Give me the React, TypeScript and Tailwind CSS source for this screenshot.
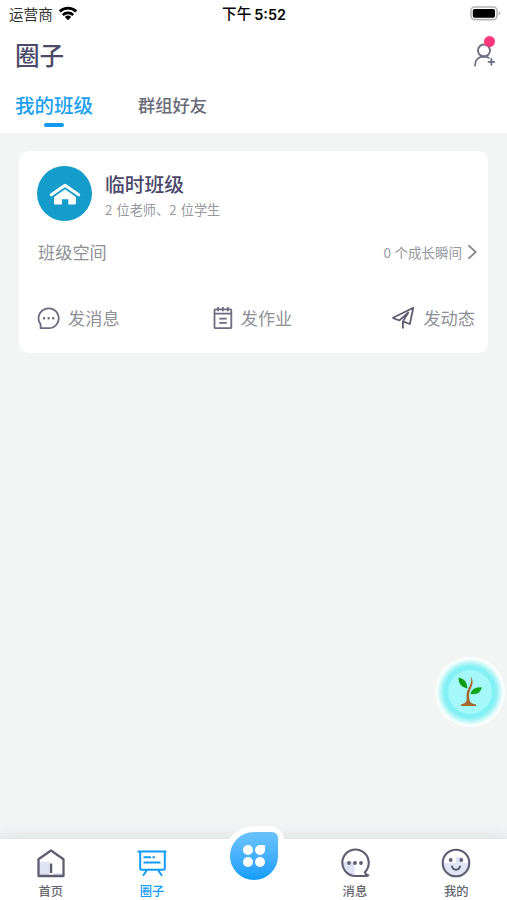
import { useState } from "react";

const WifiIcon = () => (
    <svg width="20" height="15" viewBox="0 0 20 15" fill="none" stroke="#000" strokeWidth="2.7">
        <path d="M1.8 5.5a11.8 11.8 0 0 1 16.4 0" />
        <path d="M4.8 9a7.5 7.5 0 0 1 10.4 0" />
        <path d="M10 14.2l-3.2-3.3a4.6 4.6 0 0 1 6.4 0z" fill="#000" stroke="none" />
    </svg>
);

const BatteryIcon = () => (
    <svg width="31" height="15" viewBox="0 0 31 15">
        <rect x="1" y="1" width="26" height="12.6" rx="3.6" fill="#fff" stroke="#b5b5b5" strokeWidth="1.6" />
        <rect x="2.8" y="2.9" width="22.2" height="8.9" rx="1.8" fill="#000" />
        <path d="M28.6 5.2q1.8.6 1.8 2.1t-1.8 2.1z" fill="#b5b5b5" />
    </svg>
);

const AddFriendIcon = () => (
    <svg width="24" height="25" viewBox="0 0 24 25" fill="none" stroke="#6b6d80" strokeWidth="1.8" strokeLinecap="round">
        <circle cx="11" cy="7.5" r="6" />
        <path d="M2 22.5c0-5.5 3.5-9 9-9 2 0 3.6.5 4.8 1.4" />
        <path d="M18.4 16v5.8M15.5 18.9h5.8" />
    </svg>
);

const HouseIcon = () => (
    <svg width="32" height="24" viewBox="0 0 32 24" fill="none">
        <path d="M2.3 12.8 16 3.2l13.7 9.6" stroke="#fff" strokeWidth="3" strokeLinecap="round" strokeLinejoin="round" />
        <path d="M5 15 16 7.2 27 15V21q0 1.5-1.5 1.5h-6.2v-5.3h-6.4v5.3H6.5Q5 22.5 5 21z" fill="#fff" />
    </svg>
);

const ChatIcon = () => (
    <svg width="24" height="24" viewBox="0 0 24 24" fill="none" stroke="#6d6b7e" strokeWidth="1.8" strokeLinejoin="round">
        <path d="M11.7 22.2H3.6V18.3A10.1 9.9 0 1 1 11.7 22.2z" />
        <path d="M7 12.3h.1M11.6 12.3h.1M16.2 12.3h.1" strokeWidth="2.4" strokeLinecap="round" />
    </svg>
);

const HomeworkIcon = () => (
    <svg width="20" height="24" viewBox="0 0 20 24" fill="none" stroke="#6d6b7e" strokeWidth="1.8" strokeLinejoin="round">
        <rect x="1.5" y="3.3" width="16.8" height="18.9" rx="1" />
        <path d="M1.5 7.7h16.8M5 1v4.3M9.9 1v4.3M14.8 1v4.3M6.2 12.7h7.6M6.2 16.9h7.6" />
    </svg>
);

const PlaneIcon = () => (
    <svg width="24" height="24" viewBox="0 0 24 24" fill="none" stroke="#5f5e70" strokeWidth="1.8" strokeLinejoin="round">
        <path d="M1.5 12 22.3 1.7 18.8 18 11.9 15.4V22.5M1.5 12l7 2.3L17.3 6.5 11.9 15.4" />
    </svg>
);

const HomeIcon = () => (
    <svg width="30" height="30" viewBox="0 0 30 30" fill="none">
        <path d="M3 14h10v14H3zM18 25h8v3h-8z" fill="#dfe1f5" />
        <path d="M2.5 11.3 15 2.5l12.5 8.8v16.7h-25z" stroke="#5f5d70" strokeWidth="2.3" strokeLinejoin="round" />
        <path d="M15 15.5V25" stroke="#5f5d70" strokeWidth="2.5" />
    </svg>
);

const BoardIcon = () => (
    <svg width="30" height="30" viewBox="0 0 30 30" fill="none" stroke="#139cf6" strokeWidth="2">
        <path d="M.6 3.5h28.8" />
        <path d="M3.2 3.5v17.2q0 1 1 1h22.6q1 0 1-1V3.5M10 22l-4 5.7M21 22l4 5.7" />
        <path d="M6.5 9.2h7.5M15.5 9.2h2.4M6.5 14.6h17" />
    </svg>
);

const MessageIcon = () => (
    <svg width="30" height="30" viewBox="0 0 30 30" fill="none">
        <path d="M2.5 14h12v13.5A13 13 0 0 1 2.5 14z" fill="#dfe1f5" />
        <path d="M28.3 27.3Q25.8 27.2 24.8 24.2A13.2 13.2 0 1 0 15.5 28H26.5L28.3 27.3" stroke="#5f5d70" strokeWidth="2.1" strokeLinecap="round" strokeLinejoin="round" />
        <g fill="#5f5d70">
            <circle cx="9" cy="15" r="1.9" />
            <circle cx="15" cy="15" r="1.9" />
            <circle cx="21" cy="15" r="1.9" />
        </g>
    </svg>
);

const SmileIcon = () => (
    <svg width="30" height="30" viewBox="0 0 30 30" fill="none">
        <circle cx="15" cy="15" r="13.3" fill="#fff" />
        <path d="M2 15h13V9h5v6h8a13 13 0 0 1-26 0z" fill="#e1e4f6" />
        <circle cx="15" cy="15" r="13.3" stroke="#5f5d70" strokeWidth="2.1" />
        <circle cx="9.7" cy="12" r="1.9" fill="#5f5d70" />
        <circle cx="20.3" cy="12" r="1.9" fill="#5f5d70" />
        <path d="M11 18.5q1 3.3 4 3.3t4-3.3" stroke="#5f5d70" strokeWidth="2" strokeLinecap="round" />
    </svg>
);

const SproutIcon = () => (
    <svg width="28" height="34" viewBox="0 0 28 34">
        <path d="M14.5 1.5C17.500 5 17 9 15 13c-1.700 3.600-2.200 6-1.800 10 .2 4 2 5.800 6.800 6.400v1.600H5v-1.600c4.500-.8 6-2.500 5.600-6.400-.4-4.500.6-7.500 2.400-10.700C15 8.500 16 5.500 14.500 1.500z" fill="#a5682c" />
        <path d="M2.500 2.500q8.500 1.200 9 11-9-1-9-11z" fill="#109a14" />
        <path d="M14.500 19q1.500-7.500 11.500-6.600-2.200 7.800-11.500 6.600z" fill="#12a61a" />
    </svg>
);

const tabs = ["我的班级", "群组好友"];

const actions = [
    { label: "发消息", icon: <ChatIcon />, style: "gap-[7px]" },
    { label: "发作业", icon: <HomeworkIcon />, style: "gap-2 -ml-[6px]" },
    { label: "发动态", icon: <PlaneIcon />, style: "gap-2" },
];

const ClassCard = () => (
    <div className="mx-[19px] mt-[18px] h-[202px] rounded-[10px] bg-white pl-[18px] pr-[13px] pt-[15px]">
        <div className="flex gap-[13px]">
            <div className="flex h-[55px] w-[55px] items-center justify-center rounded-full bg-[#149ccb] pt-px">
                <HouseIcon />
            </div>
            <div className="flex flex-col pt-1">
                <h2 className="text-[19.8px] leading-7 font-medium text-[#4b4869]">临时班级</h2>
                <p className="flex text-[13.2px] leading-6 text-[#97979e]">
                    <span className="w-[11.5px]">2</span>位老师、<span className="w-[11.5px]">2</span>位学生
                </p>
            </div>
        </div>
        <div className="mt-[17px] -mr-[4px] flex h-[26px] items-center justify-between">
            <span className="pl-px text-[17.2px] text-[#8f9096]">班级空间</span>
            <span className="flex items-center text-[13.5px] text-[#9698a0]">
                <span className="w-[11px]">0</span>个成长瞬间
                <svg className="ml-1" width="13" height="18" viewBox="0 0 13 18" fill="none" stroke="#85868e" strokeWidth="1.8">
                    <path d="M2.5 2.3 9.7 9l-7.2 6.7" />
                </svg>
            </span>
        </div>
        <div className="mt-[40px] flex h-[26px] items-center justify-between">
            {actions.map((action)=>(
                <button key={action.label} className={`flex items-center ${action.style} text-[17.2px] text-[#8f9097]`}>
                    {action.icon}
                    <span>{action.label}</span>
                </button>
            ))}
        </div>
    </div>
);

const NavItem = ({ label, active, children }: { label: string; active?: boolean; children: React.ReactNode }) => (
    <button className={`flex flex-1 flex-col items-center pt-[9px] ${active ? "text-[#139cf6]" : "text-[#66666f]"}`}>
        {children}
        <span className="mt-1 text-[12.3px] leading-[18px] font-medium">{label}</span>
    </button>
);

const App = () => {
    const [tab, setTab] = useState(0);

    return(
        <div className="relative flex h-[900px] w-full flex-col overflow-hidden bg-[#f3f5f5] font-['Noto_Sans_CJK_SC',sans-serif]">
            <header className="h-[133px] shrink-0 bg-white">
                <div className="flex h-[27px] items-center justify-between pl-[9px] pr-[6px] text-[14.6px]">
                    <div className="flex flex-1 items-center gap-[5px] text-[#333]">
                        <span>运营商</span>
                        <WifiIcon />
                    </div>
                    <div className="-ml-[2px] flex gap-[3px] text-black">
                        <span className="font-medium">下午</span>
                        <span className="pt-[2px] font-['Inter','Noto_Sans_CJK_SC',sans-serif] text-[14.4px] font-semibold">5:52</span>
                    </div>
                    <div className="flex flex-1 justify-end">
                        <BatteryIcon />
                    </div>
                </div>
                <div className="flex h-[54px] items-center justify-between pl-[15px] pr-[10px]">
                    <h1 className="text-[24.6px] font-medium text-[#4b4a69]">圈子</h1>
                    <button className="relative pt-[3px]">
                        <AddFriendIcon />
                        <span className="absolute -top-[4px] right-[2px] h-[11px] w-[11px] rounded-full bg-[#fd387c]"></span>
                    </button>
                </div>
                <div className="flex h-[52px] gap-[45px] pl-[15px]">
                    {tabs.map((name, i)=>(
                        <button key={name} onClick={()=>setTab(i)} className="flex flex-col items-center">
                            <span className={`flex h-[42px] items-center pt-[6px] font-medium ${tab === i ? "text-[19.5px] text-[#1b9ff1]" : "text-[17.3px] text-[#6a6b79]"}`}>{name}</span>
                            {tab === i && <span className="h-[4px] w-5 rounded-full bg-[#149aed]"></span>}
                        </button>
                    ))}
                </div>
            </header>
            <main className="flex-1">
                <ClassCard />
            </main>
            <div className="absolute right-[2px] top-[657px] flex h-[70px] w-[70px] items-center justify-center rounded-full bg-[radial-gradient(circle,#a5f8fa_0,#a5f8fa_21px,#7eeff3_23px,#86f0f4_26px,#c6f7f8_30px,#f6fefe_33px,#fafefe_35px)]">
                <SproutIcon />
            </div>
            <nav className="relative flex h-[61px] shrink-0 bg-white shadow-[0_-3px_14px_rgba(125,145,145,0.22)]">
                <NavItem label="首页"><HomeIcon /></NavItem>
                <NavItem label="圈子" active><BoardIcon /></NavItem>
                <div className="flex flex-1 justify-center">
                    <button className="-mt-[13px] flex h-[60px] w-[60px] items-center justify-center rounded-[30px_14px_30px_30px] bg-white">
                        <span className="grid h-12 w-12 grid-cols-2 place-content-center justify-center gap-0.5 rounded-[24px_6px_24px_24px] bg-linear-to-b from-[#6ac3fa] to-[#0d9dfc] px-[13px]">
                            <span className="h-2.5 w-2.5 rounded-full bg-white"></span>
                            <span className="h-2.5 w-2.5 rounded-[5px_1px_5px_5px] bg-white"></span>
                            <span className="h-2.5 w-2.5 rounded-full bg-white"></span>
                            <span className="h-2.5 w-2.5 rounded-full bg-white"></span>
                        </span>
                    </button>
                </div>
                <NavItem label="消息"><MessageIcon /></NavItem>
                <NavItem label="我的"><SmileIcon /></NavItem>
            </nav>
        </div>
    );
}

export default App;
